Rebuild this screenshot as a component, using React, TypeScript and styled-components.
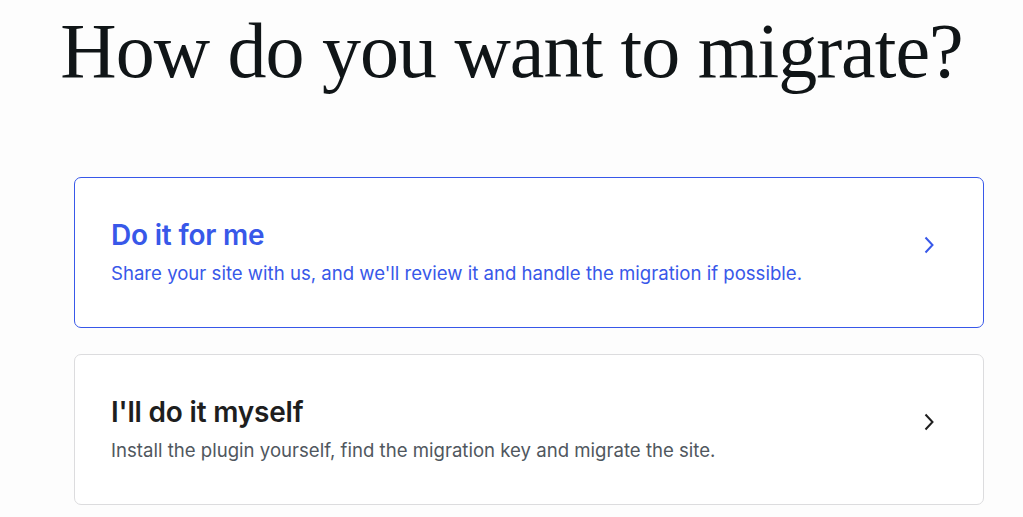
import styled, { createGlobalStyle } from 'styled-components';

const GlobalStyle = createGlobalStyle`
  html, body {
    margin: 0;
    padding: 0;
    background: #fdfdfd;
  }
  body {
    font-family: Inter, "Noto Sans", sans-serif;
    -webkit-font-smoothing: antialiased;
  }
`;

const Page = styled.main`
  width: 1023px;
  height: 517px;
  overflow: hidden;
  display: flex;
  flex-direction: column;
  align-items: stretch;
`;

const Heading = styled.h1`
  margin: 6px 0 0;
  text-align: center;
  font-family: "Liberation Serif", "DejaVu Serif", serif;
  font-weight: 400;
  font-size: 78px;
  line-height: 90px;
  letter-spacing: -1px;
  color: #101517;
`;

const Options = styled.div`
  display: flex;
  flex-direction: column;
  gap: 26px;
  margin: 81px 39px 0 74px;
`;

const Option = styled.button<{ $active?: boolean }>`
  display: flex;
  align-items: center;
  justify-content: space-between;
  height: 151px;
  padding: 0 48px 2px 36px;
  box-sizing: border-box;
  background: #fff;
  border: 1px solid ${({ $active }) => ($active ? '#3858e9' : '#dcdcde')};
  border-radius: 7px;
  text-align: left;
  cursor: pointer;
  color: ${({ $active }) => ($active ? '#3858e9' : '#1e1e1e')};
`;

const Texts = styled.div`
  display: flex;
  flex-direction: column;
  gap: 10px;
`;

const Title = styled.span`
  font-family: Inter, sans-serif;
  font-size: 28px;
  font-weight: 600;
  line-height: 32px;
  letter-spacing: -0.2px;
`;

const Description = styled.span<{ $active?: boolean }>`
  font-family: Inter, sans-serif;
  font-size: 18.6px;
  line-height: 24px;
  color: ${({ $active }) => ($active ? '#3858e9' : '#50575e')};
`;

const ChevronIcon = styled.svg`
  flex-shrink: 0;
  margin-bottom: 14px;
`;

function Chevron() {
  return (
    <ChevronIcon width="12" height="20" viewBox="0 0 12 20" fill="none">
      <path d="M2.5 2.5 L9.5 10 L2.5 17.5" stroke="currentColor" strokeWidth="2" />
    </ChevronIcon>
  );
}

export default function App() {
  return (
    <Page>
      <GlobalStyle />
      <Heading>How do you want to migrate?</Heading>
      <Options>
        <Option $active>
          <Texts>
            <Title>Do it for me</Title>
            <Description $active>
              Share your site with us, and we'll review it and handle the migration if possible.
            </Description>
          </Texts>
          <Chevron />
        </Option>
        <Option>
          <Texts>
            <Title>I'll do it myself</Title>
            <Description>
              Install the plugin yourself, find the migration key and migrate the site.
            </Description>
          </Texts>
          <Chevron />
        </Option>
      </Options>
    </Page>
  );
}
